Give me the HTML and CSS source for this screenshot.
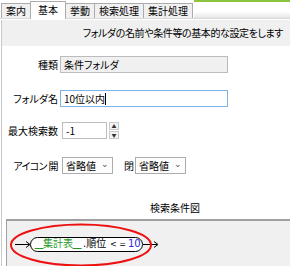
FILE: index.html
```html
<!DOCTYPE html>
<html lang="ja">
<head>
    <meta charset="UTF-8">
    <title>フォルダ設定</title>
    <link rel="stylesheet" href="styles.css">
</head>
<body>

<div class="tabs">
    <span class="tab">案内</span>
    <span class="tab active">基本</span>
    <span class="tab">挙動</span>
    <span class="tab">検索処理</span>
    <span class="tab">集計処理</span>
    <span class="tab-fill"></span>
</div>

<div class="page">
    <div class="page-head">フォルダの名前や条件等の基本的な設定をします</div>

    <div class="form">
        <div class="row row-kind">
            <label class="row-label">種類</label>
            <input type="text" class="field field-readonly" value="条件フォルダ" disabled>
        </div>
        <div class="row row-name">
            <label class="row-label" for="folder-name">フォルダ名</label>
            <div class="field field-focus" id="folder-name">10位以内<span class="caret"></span></div>
        </div>
        <div class="row row-max">
            <label class="row-label" for="max-count">最大検索数</label>
            <input type="text" id="max-count" class="field field-num" value="-1">
            <div class="spin">
                <span class="spin-btn">▲</span>
                <span class="spin-btn">▼</span>
            </div>
        </div>
        <div class="row row-icon">
            <label class="row-label">アイコン 開</label>
            <div class="combo">省略値<span class="combo-arrow">&#8964;</span></div>
            <span class="combo-label">閉</span>
            <div class="combo">省略値<span class="combo-arrow">&#8964;</span></div>
        </div>
    </div>

    <div class="diagram-title">検索条件図</div>
    <div class="diagram">
        <svg width="283" height="48" viewBox="0 0 283 48">
            <line x1="8" y1="23.5" x2="22" y2="23.5" stroke="#000" stroke-width="1"/>
            <path d="M19 20.5 L23 23.5 L19 26.5" fill="none" stroke="#000" stroke-width="1"/>
            <rect x="23.5" y="16.5" width="112" height="14" rx="7" ry="7" fill="#fff" stroke="#000" stroke-width="1"/>
            <text x="28" y="26" class="node-text t-table"><tspan class="t-under">__</tspan>集計表<tspan class="t-under">__</tspan></text>
            <text x="76" y="26" class="node-text t-field">.順位</text>
            <text x="103" y="26" class="node-text t-op">&lt; =</text>
            <text x="121" y="26" class="node-text t-num">10</text>
            <line x1="136" y1="23.5" x2="150" y2="23.5" stroke="#000" stroke-width="1"/>
            <path d="M147 20.5 L151 23.5 L147 26.5" fill="none" stroke="#000" stroke-width="1"/>
            <ellipse cx="74" cy="24" rx="70" ry="20.5" fill="none" stroke="#ee1111" stroke-width="2"/>
        </svg>
    </div>
</div>

</body>
</html>
```

FILE: styles.css
```css
body {
    margin: 0;
    width: 290px;
    height: 266px;
    overflow: hidden;
    background: #fff;
    color: #000;
    font-family: "Noto Sans CJK JP", sans-serif;
    font-size: 10px;
    font-feature-settings: "palt";
}
.tabs {
    display: flex;
    align-items: flex-end;
    height: 18px;
    padding-left: 1px;
    border-bottom: 1px solid #d9d9d9;
}
.tab {
    height: 14px;
    line-height: 14px;
    padding: 0 4px;
    margin-right: -1px;
    border: 1px solid #acacac;
    border-bottom: none;
    background: #f0f0f0;
}
.tab.active {
    height: 17px;
    line-height: 16px;
    padding: 0 7px;
    background: #fff;
    position: relative;
    z-index: 1;
    margin-bottom: -1px;
}
.tab-fill {
    flex: 1;
    align-self: stretch;
    margin-left: 2px;
    border-top: 2px solid #8dc43f;
    background: linear-gradient(#fff 60%, #e6e6e6);
}
.page {
    border-left: 1px solid #c9c9c9;
    margin-left: 1px;
    height: 247px;
}
.page-head {
    height: 26px;
    margin-top: 1px;
    line-height: 26px;
    background: #f0f0f0;
    text-align: right;
    padding-right: 7px;
    letter-spacing: -0.4px;
}
.form {
    display: flex;
    flex-direction: column;
}
.row {
    display: flex;
    align-items: center;
}
.row-label {
    width: 56px;
    text-align: right;
    margin-right: 2px;
    white-space: nowrap;
}
.row-kind { margin-top: 10px; }
.row-name { margin-top: 17px; }
.row-max { margin-top: 15px; }
.row-icon { margin-top: 18px; }
.row-icon .row-label {
    letter-spacing: -0.6px;
}
.field {
    box-sizing: border-box;
    width: 168px;
    height: 17px;
    padding: 0 3px;
    border: 1px solid #bcbcbc;
    font: inherit;
    color: #000;
    line-height: 15px;
    background: #fff;
}
.field-readonly {
    background: #f0f0f0;
}
.field-focus {
    border-color: #7eb4ea;
    display: flex;
    align-items: center;
}
.caret {
    display: inline-block;
    width: 1px;
    height: 12px;
    background: #000;
}
.field-num {
    width: 45px;
    margin-left: 2px;
    height: 17px;
}
.spin {
    display: flex;
    flex-direction: column;
    margin-left: 2px;
    gap: 1px;
}
.spin-btn {
    box-sizing: border-box;
    width: 10px;
    height: 8px;
    border: 1px solid #c9c9c9;
    background: #f3f3f3;
    font-size: 5px;
    line-height: 6px;
    text-align: center;
    color: #333;
}
.combo {
    box-sizing: border-box;
    display: flex;
    align-items: center;
    justify-content: space-between;
    width: 51px;
    height: 17px;
    margin-left: 2px;
    padding: 0 3px 0 3px;
    border: 1px solid #acacac;
    background: #fdfdfd;
}
.combo-arrow {
    color: #555;
    font-size: 9px;
    line-height: 9px;
    margin-top: -4px;
}
.combo-label {
    margin-left: 11px;
}
.combo-label + .combo {
    margin-left: 1px;
}
.diagram-title {
    margin-top: 26px;
    padding-left: 148px;
    line-height: 16px;
}
.diagram {
    margin-top: 3px;
    margin-left: 4px;
    height: 48px;
    border-top: 2px solid #a0a0a0;
    border-left: 1px solid #a0a0a0;
    background: #f0f0f0;
}
.diagram svg {
    display: block;
}
.node-text {
    font-family: "DejaVu Sans", "Noto Sans CJK JP", sans-serif;
    font-size: 10px;
}
.t-table {
    fill: #1f9a1f;
}
.t-under {
    font-size: 8px;
    stroke: #1f9a1f;
    stroke-width: 0.6px;
}
.t-field,
.t-op {
    fill: #000;
}
.t-op {
    font-size: 8px;
}
.t-num {
    fill: #2a2ae6;
}
```
